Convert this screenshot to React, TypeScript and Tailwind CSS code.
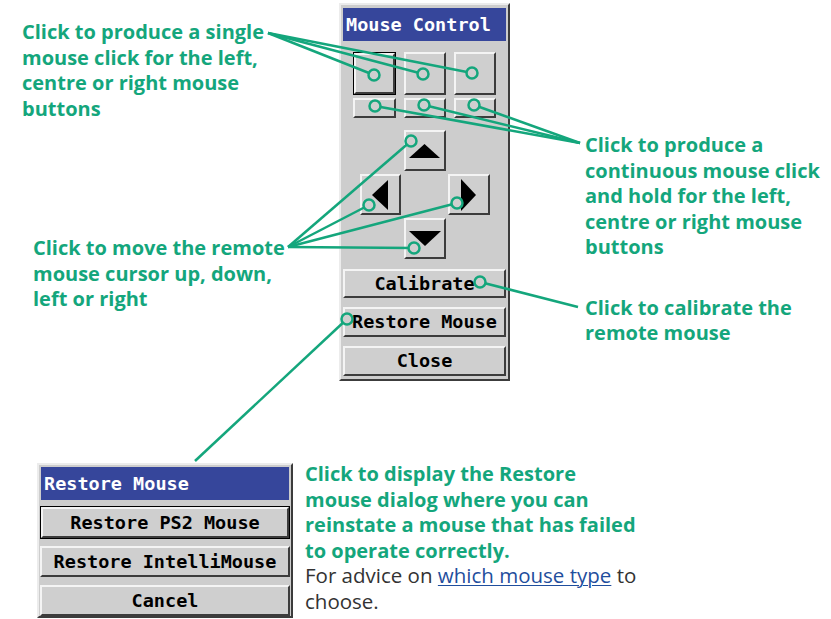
import type { ReactNode } from "react"

const mono = { fontFamily: '"DejaVu Sans Mono", "Liberation Mono", monospace' }
const sans = { fontFamily: '"Open Sans", "Noto Sans", sans-serif' }

function Bevel({ className = "", selected = false, children }: { className?: string; selected?: boolean; children?: ReactNode }) {
  const inner = (
    <div className="flex h-full w-full items-center justify-center border-2 border-t-[#f4f4f4] border-l-[#f4f4f4] border-r-[#3c3c3c] border-b-[#3c3c3c] bg-[#cfcfcf] text-[18.5px] font-bold text-black" style={mono}>
      {children}
    </div>
  )
  if (selected) return <div className={`border border-black ${className}`}>{inner}</div>
  return <div className={className}>{inner}</div>
}

function TitleBar({ children }: { children: ReactNode }) {
  return (
    <div className="mx-[2px] flex h-[33px] items-center bg-[#36469b] px-[3px] text-[18.5px] font-bold text-white" style={mono}>
      {children}
    </div>
  )
}

function Tri({ dir }: { dir: "up" | "down" | "left" | "right" }) {
  if (dir === "up") return <svg width="31" height="14"><polygon points="15.5,0 31,14 0,14" fill="#000" /></svg>
  if (dir === "down") return <svg width="32" height="15"><polygon points="0,0 32,0 16,15" fill="#000" /></svg>
  if (dir === "left") return <svg width="16" height="30"><polygon points="0,15 16,0 16,30" fill="#000" /></svg>
  return <svg width="15" height="32"><polygon points="0,0 15,16 0,32" fill="#000" /></svg>
}

function Label({ className = "", children }: { className?: string; children: ReactNode }) {
  return (
    <p className={`whitespace-nowrap text-[20px] font-bold leading-[25.5px] text-[#14a67c] ${className}`} style={sans}>
      {children}
    </p>
  )
}

const G = "#14a67c"
const dots: [number, number][] = [
  [374, 75], [423, 74], [472, 73],
  [375, 106], [424, 105], [474, 105],
  [411, 141], [369, 205], [457, 203], [414, 248],
  [480, 282], [347, 319],
]
const lines: [number, number, number, number][] = [
  [268, 33, 374, 75], [268, 33, 423, 74], [268, 33, 472, 73],
  [375, 106, 580, 143], [424, 105, 580, 143], [474, 105, 580, 143],
  [288, 247, 411, 141], [288, 247, 369, 205], [288, 247, 457, 203], [288, 247, 414, 248],
  [480, 282, 578, 307],
  [347, 319, 195, 461],
]

export default function App() {
  return (
    <div className="relative h-[619px] w-[831px] overflow-hidden bg-white">
      <div className="flex">
        <div className="flex w-[339px] flex-col">
          <Label className="ml-[22px] mt-[19px]">
            Click to produce a single<br />mouse click for the left,<br />centre or right mouse<br />buttons
          </Label>
          <Label className="ml-[33px] mt-[114px]">
            Click to move the remote<br />mouse cursor up, down,<br />left or right
          </Label>
        </div>

        <div className="mt-[3px] flex w-[171px] flex-col border-2 border-t-[#ececec] border-l-[#ececec] border-r-[#3c3c3c] border-b-[#3c3c3c] bg-[#cdcdcd] pb-[3px] pt-[3px]">
          <TitleBar>Mouse Control</TitleBar>
          <div className="mt-[11px] flex justify-center gap-[8px]">
            <Bevel selected className="h-[43px] w-[43px]" />
            <Bevel className="h-[43px] w-[42px]" />
            <Bevel className="h-[43px] w-[42px]" />
          </div>
          <div className="mt-[3px] flex justify-center gap-[8px]">
            <Bevel className="h-[20px] w-[43px]" />
            <Bevel className="h-[20px] w-[42px]" />
            <Bevel className="h-[20px] w-[42px]" />
          </div>
          <div className="mt-[12px] flex flex-col items-center gap-[3px]">
            <Bevel className="h-[41px] w-[42px]"><Tri dir="up" /></Bevel>
            <div className="flex gap-[47px]">
              <Bevel className="h-[41px] w-[41px]"><Tri dir="left" /></Bevel>
              <Bevel className="h-[41px] w-[42px]"><Tri dir="right" /></Bevel>
            </div>
            <Bevel className="h-[41px] w-[42px]"><Tri dir="down" /></Bevel>
          </div>
          <Bevel className="mx-[2px] mt-[10px] h-[29px]">Calibrate</Bevel>
          <Bevel className="mx-[2px] mt-[9px] h-[30px]">Restore Mouse</Bevel>
          <Bevel className="mx-[2px] mt-[9px] h-[30px]">Close</Bevel>
        </div>

        <div className="flex flex-1 flex-col pl-[75px]">
          <Label className="mt-[132px]">
            Click to produce a<br />continuous mouse click<br />and hold for the left,<br />centre or right mouse<br />buttons
          </Label>
          <Label className="mt-[35px]">
            Click to calibrate the<br />remote mouse
          </Label>
        </div>
      </div>

      <div className="mt-[82px] flex items-start pl-[37px]">
        <div className="flex w-[256px] flex-col border-2 border-t-[#ececec] border-l-[#ececec] border-r-[#3c3c3c] border-b-[#3c3c3c] bg-[#cdcdcd] pt-[2px]">
          <TitleBar>Restore Mouse</TitleBar>
          <Bevel selected className="mx-[1px] mt-[6px] h-[33px]">Restore PS2 Mouse</Bevel>
          <Bevel className="mx-[1px] mt-[7px] h-[31px]">Restore IntelliMouse</Bevel>
          <Bevel className="mx-[1px] mt-[8px] h-[31px]">Cancel</Bevel>
        </div>
        <div className="-mt-[2px] ml-[12px]">
          <Label>
            Click to display the Restore<br />mouse dialog where you can<br />reinstate a mouse that has failed<br />to operate correctly.
          </Label>
          <p className="whitespace-nowrap text-[20.5px] leading-[25.5px] text-[#333333]" style={sans}>
            For advice on <span className="text-[#1f4e9d] underline decoration-1 underline-offset-2">which mouse type</span> to<br />choose.
          </p>
        </div>
      </div>

      <svg className="pointer-events-none absolute inset-0" width="831" height="619">
        {lines.map(([x1, y1, x2, y2], i) => (
          <line key={i} x1={x1} y1={y1} x2={x2} y2={y2} stroke={G} strokeWidth="2.5" />
        ))}
        {dots.map(([cx, cy], i) => (
          <circle key={i} cx={cx} cy={cy} r="5.5" fill="#cfcfcf" stroke={G} strokeWidth="2.5" />
        ))}
      </svg>
    </div>
  )
}
